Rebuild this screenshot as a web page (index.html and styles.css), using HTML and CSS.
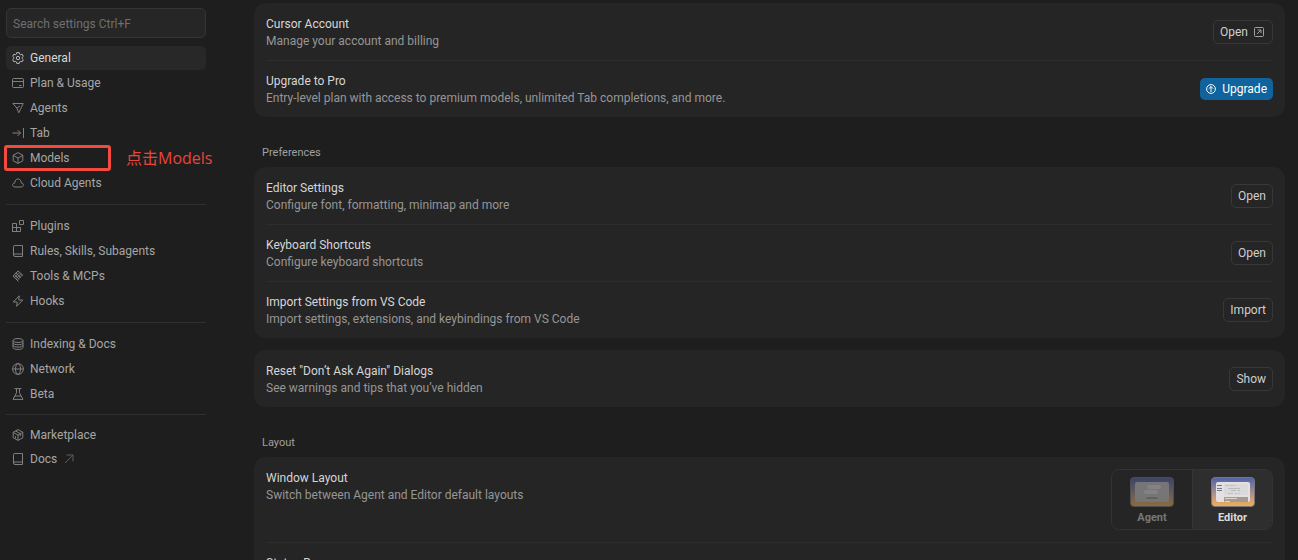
FILE: index.html
```html
<!DOCTYPE html>
<html lang="en">
<head>
<meta charset="utf-8">
<title>Cursor Settings</title>
<link rel="stylesheet" href="styles.css">
</head>
<body>
<div class="app">
  <aside class="sidebar">
    <input class="search" type="text" placeholder="Search settings Ctrl+F" aria-label="Search settings">
    <nav class="nav">
      <div class="group">
        <a class="item active" href="#general"><svg class="icon" viewBox="0 0 12 12"><path d="M4.8 .6h2.4l.4 1.5 1 .6 1.5-.5 1.200 2.100-1.100 1.100v1.200l1.100 1.100-1.200 2.100-1.500-.5-1 .6-.4 1.500H4.800l-.4-1.500-1-.6-1.500.5L.7 7.700l1.100-1.100V5.400L.7 4.300l1.200-2.100 1.500.5 1-.6z"/><circle cx="6" cy="6" r="1.700"/></svg>General</a>
        <a class="item" href="#plan"><svg class="icon" viewBox="0 0 12 12"><rect x=".5" y="1.500" width="11" height="9" rx="1"/><path d="M.5 4.500h11M7 8.500h2.500"/></svg>Plan &amp; Usage</a>
        <a class="item" href="#agents"><svg class="icon" viewBox="0 0 12 12"><path d="M.8 1.500h10.400L6.800 10.800 4.800 6zM4.800 6l3-2"/></svg>Agents</a>
        <a class="item" href="#tab"><svg class="icon" viewBox="0 0 12 12"><path d="M.5 6h8M5.500 3l3 3-3 3M11.500 1v10"/></svg>Tab</a>
        <a class="item marked" href="#models"><svg class="icon" viewBox="0 0 12 12"><path d="M6 .6l4.800 2.600v5.600L6 11.400 1.200 8.800V3.200zM1.200 3.400L6 6l4.800-2.600M6 6v5.200"/></svg>Models<span class="note" lang="zh">点击Models</span></a>
        <a class="item" href="#cloud"><svg class="icon" viewBox="0 0 12 12"><path d="M3 10C-.2 10-.2 6 2.800 6 2.800.6 9.200.6 9.200 6c3 0 3 4 0 4z"/></svg>Cloud Agents</a>
      </div>
      <div class="group">
        <a class="item" href="#plugins"><svg class="icon" viewBox="0 0 12 12"><path d="M.5 3.500h4v8h-4zM.5 7.500h8v4h-8zM7.500.5h4v4h-4z"/></svg>Plugins</a>
        <a class="item" href="#rules"><svg class="icon" viewBox="0 0 12 12"><path d="M1.500 10V1.500q0-1 1-1h8v11H3q-1.500 0-1.500-1.500 0-1 1.500-1h7.500"/></svg>Rules, Skills, Subagents</a>
        <a class="item" href="#tools"><svg class="icon" viewBox="0 0 12 12"><path d="M1 6l5-5M2.500 7.300l5-5M4 8.600l5-5M5.500 9.800l5-5M6 .8l5 4.800M3.800 2.800l5 4.800M2.200 4.400l5 4.800M1 6l5.500 5.500"/></svg>Tools &amp; MCPs</a>
        <a class="item" href="#hooks"><svg class="icon" viewBox="0 0 12 12"><path d="M7.300.8L1.200 7h4L4.600 11.300 10.800 5H6.700z"/></svg>Hooks</a>
      </div>
      <div class="group">
        <a class="item" href="#indexing"><svg class="icon" viewBox="0 0 12 12"><ellipse cx="6" cy="2.500" rx="5" ry="2"/><path d="M1 2.500v7c0 2.600 10 2.600 10 0v-7M1 4.800c0 2.600 10 2.600 10 0M1 7.200c0 2.600 10 2.600 10 0"/></svg>Indexing &amp; Docs</a>
        <a class="item" href="#network"><svg class="icon" viewBox="0 0 12 12"><circle cx="6" cy="6" r="5.400"/><ellipse cx="6" cy="6" rx="2.500" ry="5.400"/><path d="M.6 6h10.800"/></svg>Network</a>
        <a class="item" href="#beta"><svg class="icon" viewBox="0 0 12 12"><path d="M2.500.6h7M4.500.6v4.200L1 11.400h10L7.500 4.800V.6M3 8h6"/></svg>Beta</a>
      </div>
      <div class="group compact">
        <a class="item" href="#marketplace"><svg class="icon" viewBox="0 0 12 12"><path d="M6 .6l4.800 2.600v5.600L6 11.400 1.200 8.800V3.200zM1.200 3.400L6 6l4.800-2.600M6 6v5.200M3.600 2L8.400 4.600v2.600M3.500 7.200v2"/></svg>Marketplace</a>
        <a class="item" href="#docs"><svg class="icon" viewBox="0 0 12 12"><path d="M1.500 10V1.500q0-1 1-1h8v11H3q-1.500 0-1.500-1.500 0-1 1.500-1h7.500"/></svg>Docs<svg class="icon external" viewBox="0 0 12 12"><path d="M2 10l8-8M3.500 2H10v6.500"/></svg></a>
      </div>
    </nav>
  </aside>

  <main class="content">
    <section class="card">
      <div class="row">
        <div class="text"><h3>Cursor Account</h3><p>Manage your account and billing</p></div>
        <button class="btn" type="button">Open<svg class="btn-icon boxed" viewBox="0 0 10 10"><rect x=".5" y=".5" width="9" height="9" rx="1"/><path d="M3 7l4-4M3.800 3H7v3.200"/></svg></button>
      </div>
      <div class="row">
        <div class="text"><h3>Upgrade to Pro</h3><p>Entry-level plan with access to premium models, unlimited Tab completions, and more.</p></div>
        <button class="btn primary" type="button"><svg class="btn-icon" viewBox="0 0 10 10"><circle cx="5" cy="5" r="4.400"/><path d="M5 8V2.500M2.800 4.700L5 2.500l2.200 2.200"/></svg>Upgrade</button>
      </div>
    </section>

    <h2 class="heading">Preferences</h2>
    <section class="card">
      <div class="row">
        <div class="text"><h3>Editor Settings</h3><p>Configure font, formatting, minimap and more</p></div>
        <button class="btn" type="button">Open</button>
      </div>
      <div class="row">
        <div class="text"><h3>Keyboard Shortcuts</h3><p>Configure keyboard shortcuts</p></div>
        <button class="btn" type="button">Open</button>
      </div>
      <div class="row">
        <div class="text"><h3>Import Settings from VS Code</h3><p>Import settings, extensions, and keybindings from VS Code</p></div>
        <button class="btn" type="button">Import</button>
      </div>
    </section>
    <section class="card stacked">
      <div class="row">
        <div class="text"><h3>Reset "Don’t Ask Again" Dialogs</h3><p>See warnings and tips that you’ve hidden</p></div>
        <button class="btn" type="button">Show</button>
      </div>
    </section>

    <h2 class="heading">Layout</h2>
    <section class="card">
      <div class="row tall">
        <div class="text"><h3>Window Layout</h3><p>Switch between Agent and Editor default layouts</p></div>
        <div class="switch">
          <button class="option" type="button" aria-pressed="false">
            <svg class="thumb" viewBox="0 0 44 30">
              <defs><linearGradient id="sky" x1="0" y1="0" x2="0" y2="1"><stop offset="0" stop-color="#4d62aa"/><stop offset=".5" stop-color="#a58d92"/><stop offset="1" stop-color="#f4af55"/></linearGradient></defs>
              <rect x=".5" y=".5" width="43" height="29" rx="3.500" fill="url(#sky)" stroke="#777"/>
              <rect x="5" y="5" width="34" height="20" rx="2" fill="#c9c6c9"/>
              <rect x="17" y="8" width="14" height="4" rx="2" fill="#e2dfe2"/><rect x="14" y="13" width="14" height="4" rx="2" fill="#e2dfe2"/><rect x="16" y="20" width="12" height="2" rx="1" fill="#a09da0"/>
            </svg>Agent</button>
          <button class="option selected" type="button" aria-pressed="true">
            <svg class="thumb" viewBox="0 0 44 30">
              <rect x=".5" y=".5" width="43" height="29" rx="3.500" fill="url(#sky)" stroke="#777"/>
              <rect x="5" y="5" width="34" height="20" rx="2" fill="#e4dfe0"/>
              <rect x="13" y="7" width="24" height="11" fill="#dadada"/><rect x="13" y="20" width="24" height="5" fill="#a79b8f"/>
              <path d="M6 8.500h5M6 11.500h5M6 13.500h5" stroke="#77728f"/>
              <path d="M14 8.500h5M17 16.500h5" stroke="#a3cfc9"/><path d="M20 8.500h2M27 13.500h2" stroke="#a5b8cd"/><path d="M23 8.500h2M27 16.500h2" stroke="#dfbfa0"/><path d="M17 11.500h12M20 13.500h5M24 16.500h2" stroke="#bbb"/>
              <path d="M14 21.500h12M14 24.500h5" stroke="#ddd6ce"/>
            </svg>Editor</button>
        </div>
      </div>
      <div class="row">
        <div class="text"><h3>Status Bar</h3><p>Show status bar</p></div>
      </div>
    </section>
  </main>
</div>
</body>
</html>
```
FILE: styles.css
```css
*, *::before, *::after { box-sizing: border-box; }

body {
  margin: 0;
  height: 100vh;
  overflow: hidden;
  background: #1e1e1e;
  color: #d0d0d0;
  font: 12px/18px Roboto, "Noto Sans CJK SC", sans-serif;
}

h2, h3, p { margin: 0; font-size: 12px; font-weight: 400; }
button, input { font-family: inherit; }
svg { fill: none; stroke: currentColor; flex: none; }

.app { display: flex; gap: 48px; height: 100vh; padding: 0 13px 0 6px; }

.sidebar { flex: none; width: 200px; padding-top: 8px; }
.search {
  display: block;
  width: 100%;
  height: 30px;
  padding: 2px 6px 0;
  border: 1px solid #353535;
  border-radius: 5px;
  background: #262626;
  color: #ccc;
  font-size: 12px;
}
.search::placeholder { color: #6f6f6f; opacity: 1; }

.nav { padding-top: 8px; }
.group { display: flex; flex-direction: column; gap: 1px; }
.group + .group { margin-top: 9px; padding-top: 9px; border-top: 1px solid #2f2f2f; }
.group + .group.compact { gap: 0; margin-top: 8px; padding-top: 8px; }
.item {
  position: relative;
  display: flex;
  align-items: center;
  gap: 6px;
  height: 24px;
  padding: 0 6px;
  border-radius: 5px;
  color: #a6a6a6;
  text-decoration: none;
}
.item.active { background: #282828; color: #d6d6d6; }
.icon { width: 12px; height: 12px; color: #808080; }
.active .icon { color: #bbb; }
.icon.external { color: #5c5c5c; }
.marked::after {
  content: "";
  position: absolute;
  left: -2px;
  top: -1px;
  width: 107px;
  height: 26px;
  border: 3px solid #f44a3e;
  border-radius: 3px;
}
.note {
  position: absolute;
  left: 120px;
  color: #e8463b;
  font: 16px/24px "Open Sans", "Noto Sans CJK SC", sans-serif;
  white-space: nowrap;
}

.content { flex: 1; min-width: 0; padding-top: 3px; overflow: hidden; }
.card { padding: 0 12px; border-radius: 12px; background: #252525; }
.card.stacked { margin-top: 12px; }
.row {
  display: flex;
  align-items: center;
  justify-content: space-between;
  gap: 24px;
  min-height: 57px;
}
.row + .row { box-shadow: inset 0 1px #2d2d2d; }
.row.tall { align-items: flex-start; padding: 12px 0; }
.text { padding: 3px 12px 0 0; }
.tall .text { padding-top: 1px; }
.text h3 { color: #d6d6d6; line-height: 17px; }
.text p { color: #969696; line-height: 17px; }
.heading { padding: 27px 8px 5px; color: #a0a0a0; font-size: 11px; line-height: 18px; }

.btn {
  display: flex;
  align-items: center;
  gap: 6px;
  height: 24px;
  padding: 1px 6px 0;
  border: 1px solid #383838;
  border-radius: 5px;
  background: transparent;
  color: #cfcfcf;
  font-size: 12px;
  line-height: 18px;
}
.btn.primary { height: 22px; border: 0; background: #10639c; color: #fff; }
.btn-icon { width: 10px; height: 10px; }
.btn-icon.boxed { margin-right: 2px; color: #a0a0a0; }

.switch { display: flex; height: 61px; border: 1px solid #333; border-radius: 8px; overflow: hidden; }
.option {
  display: flex;
  flex-direction: column;
  align-items: center;
  gap: 3px;
  width: 80px;
  padding: 7px 0 0;
  border: 0;
  background: transparent;
  color: #777;
  font: bold 11px/15px Roboto, Arial, sans-serif;
}
.option.selected { border-left: 1px solid #363636; background: #2e2e2e; color: #dcdcdc; }
.thumb { width: 44px; height: 30px; stroke: none; opacity: .5; }
.selected .thumb { opacity: 1; }
```
